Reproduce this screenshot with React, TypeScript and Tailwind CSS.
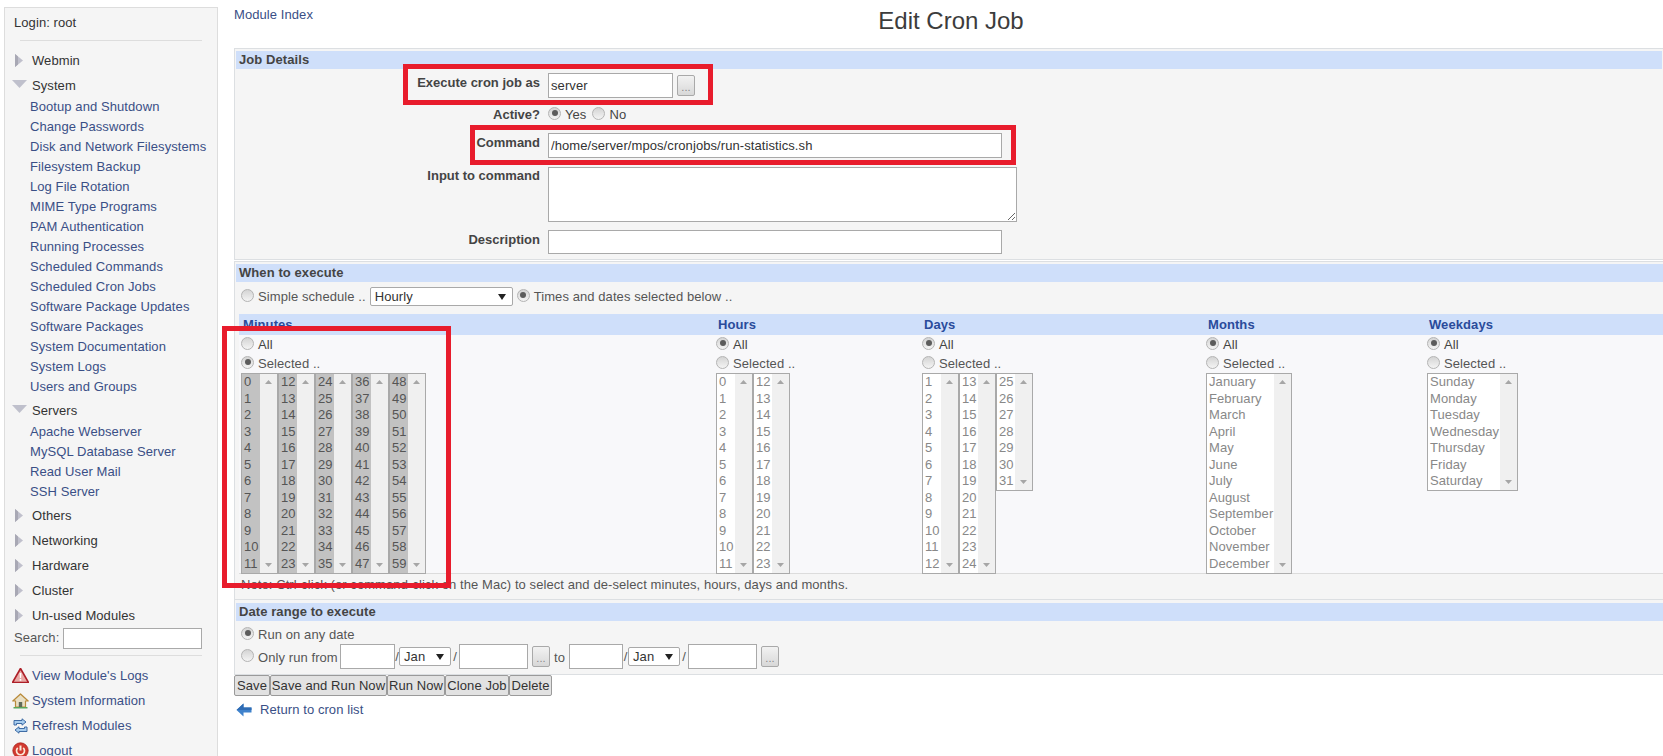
import React from 'react';

const range = (from: number, to: number) => Array.from({ length: to - from + 1 }, (_, i) => String(from + i));

const systemLinks = [
  'Bootup and Shutdown',
  'Change Passwords',
  'Disk and Network Filesystems',
  'Filesystem Backup',
  'Log File Rotation',
  'MIME Type Programs',
  'PAM Authentication',
  'Running Processes',
  'Scheduled Commands',
  'Scheduled Cron Jobs',
  'Software Package Updates',
  'Software Packages',
  'System Documentation',
  'System Logs',
  'Users and Groups',
];

const serverLinks = ['Apache Webserver', 'MySQL Database Server', 'Read User Mail', 'SSH Server'];

const months = ['January', 'February', 'March', 'April', 'May', 'June', 'July', 'August', 'September', 'October', 'November', 'December'];
const weekdays = ['Sunday', 'Monday', 'Tuesday', 'Wednesday', 'Thursday', 'Friday', 'Saturday'];

const actionButtons = [
  { label: 'Save', width: 'w-[36px]' },
  { label: 'Save and Run Now', width: 'w-[117px]' },
  { label: 'Run Now', width: 'w-[58px]' },
  { label: 'Clone Job', width: 'w-[64px]' },
  { label: 'Delete', width: 'w-[43px]' },
];

const Radio = ({ checked = false }: { checked?: boolean }) => (
  <span className="mb-[3px] flex h-[13px] w-[13px] shrink-0 items-center justify-center rounded-full border border-[#b4b4b4] bg-gradient-to-b from-[#d4d4d4] to-[#f4f4f4]">
    {checked && <span className="h-[6px] w-[6px] rounded-full bg-[#5c5c5c]" />}
  </span>
);

const Arrow = ({ up = false }: { up?: boolean }) => (
  <svg width="7" height="4" viewBox="0 0 7 4" className="text-[#a6a6a6]">
    <path d={up ? 'M3.5 0 7 4H0z' : 'M0 0h7L3.5 4z'} fill="currentColor" />
  </svg>
);

// fake multi-select list box, the scrollbar is always showing
const ListBox = ({ items, selected = false, width = 37 }: { items: string[]; selected?: boolean; width?: number }) => (
  <div className="flex shrink-0 self-start border border-[#a9a9a9] bg-white" style={{ width }}>
    <div className={`min-w-0 flex-1 pl-[2px] whitespace-nowrap leading-[16.55px] ${selected ? 'bg-[#c2c2c2] text-[#555]' : 'text-[#888]'}`}>
      {items.map((item) => (
        <div key={item}>{item}</div>
      ))}
    </div>
    <div className="flex w-[17px] shrink-0 flex-col items-center justify-between bg-[#f0f0f0] py-[6px]">
      <Arrow up />
      <Arrow />
    </div>
  </div>
);

const Select = ({ label, width }: { label: string; width: number }) => (
  <div className="flex h-[19px] shrink-0 items-center justify-between rounded-[2px] border border-[#a9a9a9] bg-white pr-[6px] pl-[4px] text-[#333]" style={{ width }}>
    <span>{label}</span>
    <svg width="8" height="6" viewBox="0 0 8 6">
      <path d="M0 0h8L4 6z" fill="#222" />
    </svg>
  </div>
);

const DotsButton = ({ className = '' }: { className?: string }) => (
  <button className={`flex h-[21px] w-[18px] shrink-0 items-end justify-center rounded-[2px] border border-[#a9a9a9] bg-gradient-to-b from-[#f2f2f2] to-[#d8d8d8] pb-[2px] text-[11px] leading-[12px] text-[#888] ${className}`}>
    ...
  </button>
);

const TextField = ({ width, height = 25, value = '' }: { width: number; height?: number; value?: string }) => (
  <input
    readOnly
    value={value}
    className="shrink-0 border border-[#a9a9a9] bg-white pl-[2px] text-[#333] outline-none"
    style={{ width, height }}
  />
);

const SectionHead = ({ title }: { title: string }) => (
  <div className="h-[18px] bg-[#cfdffa] pl-[3px] text-[13px] leading-[17px] font-bold text-[#444]">{title}</div>
);

const FormRow = ({ label, className = '', children }: { label: string; className?: string; children: React.ReactNode }) => (
  <div className={`flex ${className}`}>
    <div className="w-[304px] shrink-0 text-right font-bold tracking-normal text-[#444]">{label}</div>
    <div className="ml-[8px] flex items-center">{children}</div>
  </div>
);

const AllOrSelected = ({ name, all = true, children }: { name: string; all?: boolean; children: React.ReactNode }) => (
  <div className="flex flex-col">
    <div className="flex h-[21px] items-center bg-[#cfdffa] pl-[4px] font-bold text-[#2a4b9b]">{name}</div>
    <div className="flex h-[19px] items-center gap-[4px] pl-[2px] text-[#444]">
      <Radio checked={all} />
      <span>All</span>
    </div>
    <div className="flex h-[19px] items-center gap-[4px] pl-[2px] text-[#555]">
      <Radio checked={!all} />
      <span>Selected ..</span>
    </div>
    <div className="flex h-[201px] pl-[2px]">{children}</div>
  </div>
);

const MenuTriangle = ({ open = false }: { open?: boolean }) => (
  <span className="flex w-[27px] shrink-0 justify-center pl-px">
    {open ? (
      <svg width="15" height="8" viewBox="0 0 15 8" className="mb-[4px]">
        <path d="M0 0h15L7.500 8z" fill="#bfc0cc" />
      </svg>
    ) : (
      <svg width="8" height="13" viewBox="0 0 8 13" className="mb-[1px]">
        <path d="M0 0 8 6.500 0 13z" fill="#c0c0cc" />
        <path d="M0 0 3 2.500V10.500L0 13z" fill="#a8a8b4" />
      </svg>
    )}
  </span>
);

const MenuHead = ({ label, open = false, className = '' }: { label: string; open?: boolean; className?: string }) => (
  <div className={`flex h-[25px] items-center text-[#333] ${className}`}>
    <MenuTriangle open={open} />
    <span>{label}</span>
  </div>
);

const MenuLink = ({ label }: { label: string }) => (
  <div className="h-[20px] pl-[25px] leading-[20px] whitespace-nowrap text-[#3a4f86]">{label}</div>
);

const WarnIcon = () => (
  <svg width="17" height="15" viewBox="0 0 17 15">
    <path d="M8.500 0.500 16.500 14.500H0.500z" fill="#e9a9a6" stroke="#ad1f28" strokeWidth="1.600" strokeLinejoin="round" />
    <path d="M7.600 5h1.800l-.3 5H7.900zM7.700 11h1.600v1.700H7.700z" fill="#fff" />
  </svg>
);

const HomeIcon = () => (
  <svg width="17" height="16" viewBox="0 0 17 16">
    <path d="M8.500 1 0.800 8H3.500V14H13.500V8H16.200z" fill="#e8dfc4" stroke="#b98a3a" strokeWidth="1.200" strokeLinejoin="round" />
    <path d="M6.800 9H10.200V14H6.800z" fill="#5f6a58" />
    <path d="M1.500 14H15.500V15.500H1.500z" fill="#5aa85a" />
  </svg>
);

const RefreshIcon = () => (
  <svg width="15" height="16" viewBox="0 0 15 16">
    <path d="M1 7V2.500H9V0.800L13 4 9 7.200V5.500H3.500V7z" fill="#a8cdee" stroke="#2f5f9c" strokeWidth="0.900" strokeLinejoin="round" />
    <path d="M14 9V13.500H6V15.200L2 12 6 8.800V10.500H11.500V9z" fill="#a8cdee" stroke="#2f5f9c" strokeWidth="0.900" strokeLinejoin="round" />
  </svg>
);

const PowerIcon = () => (
  <svg width="17" height="17" viewBox="0 0 17 17">
    <circle cx="8.500" cy="8.500" r="7.700" fill="#d2392f" stroke="#a82420" strokeWidth="0.800" />
    <path d="M5.800 5.800A4 4 0 1 0 11.200 5.800" fill="none" stroke="#fbe9d8" strokeWidth="1.700" />
    <path d="M8.500 3.500V8.500" stroke="#fbe9d8" strokeWidth="2" />
  </svg>
);

const BottomLink = ({ icon, label }: { icon: React.ReactNode; label: string }) => (
  <div className="flex h-[25px] items-center text-[#3a4f86]">
    <span className="flex w-[24px] shrink-0 justify-center pl-[7px]">{icon}</span>
    <span className="ml-[3px]">{label}</span>
  </div>
);

const Sidebar = () => (
  <aside className="mt-[7px] ml-[4px] h-[760px] w-[214px] shrink-0 border border-[#dddddd] bg-[#f5f5f5]">
    <div className="h-[32px] pt-[5px] pl-[9px] leading-[20px] text-[#333]">Login: root</div>
    <div className="mx-[15px] border-t border-[#dddddd]" />
    <div className="mt-[7px]">
      <MenuHead label="Webmin" />
      <MenuHead label="System" open />
      <div className="-mt-px">
        {systemLinks.map((l) => (
          <MenuLink key={l} label={l} />
        ))}
      </div>
      <MenuHead label="Servers" open className="mt-px" />
      <div className="-mt-px">
        {serverLinks.map((l) => (
          <MenuLink key={l} label={l} />
        ))}
      </div>
      <MenuHead label="Others" className="mt-px" />
      <MenuHead label="Networking" />
      <MenuHead label="Hardware" />
      <MenuHead label="Cluster" />
      <MenuHead label="Un-used Modules" />
    </div>
    <div className="flex h-[20px] items-center pl-[9px] text-[#555]">
      <span>Search:</span>
      <input readOnly className="ml-[4px] h-[21px] w-[139px] border border-[#a9a9a9] bg-white outline-none" />
    </div>
    <div className="mx-[15px] mt-[7px] border-t border-[#dddddd]" />
    <div className="mt-[7px]">
      <BottomLink icon={<WarnIcon />} label="View Module's Logs" />
      <BottomLink icon={<HomeIcon />} label="System Information" />
      <BottomLink icon={<RefreshIcon />} label="Refresh Modules" />
      <BottomLink icon={<PowerIcon />} label="Logout" />
    </div>
  </aside>
);

export default function App() {
  return (
    <div className="relative flex h-[756px] w-[1663px] overflow-hidden bg-white font-['Liberation_Sans',Arial,sans-serif] text-[13px] tracking-[0.08px]">
      <Sidebar />

      <main className="ml-[16px] min-w-0 flex-1">
        <div className="grid h-[48px] grid-cols-[1fr_auto_1fr]">
          <a className="pt-[7px] leading-[16px] text-[#3a4f86]">Module Index</a>
          <h1 className="pt-[7px] pl-[5px] text-[24px] leading-[28px] font-normal tracking-normal text-[#3c3c3c]">Edit Cron Job</h1>
        </div>

        {/* Job details */}
        <section className="h-[212px] border border-r-0 border-[#dcdfe2] bg-[#f5f5f5] px-px pt-[2px]">
          <SectionHead title="Job Details" />
          <div className="pt-[4px]">
            <FormRow label="Execute cron job as" className="h-[25px] leading-[20px]">
              <TextField width={125} value="server" />
              <DotsButton className="ml-[4px]" />
            </FormRow>
            <FormRow label="Active?" className="h-[35px] pt-[7px] leading-[20px]">
              <div className="mb-[9px] flex items-center text-[#444]">
                <Radio checked />
                <span className="ml-[4px]">Yes</span>
                <span className="ml-[6px]">
                  <Radio />
                </span>
                <span className="ml-[4px]">No</span>
              </div>
            </FormRow>
            <FormRow label="Command" className="h-[25px] leading-[20px]">
              <TextField width={454} value="/home/server/mpos/cronjobs/run-statistics.sh" />
            </FormRow>
            <FormRow label="Input to command" className="mt-[9px] h-[55px] leading-[18px]">
              <textarea readOnly className="h-[55px] w-[469px] border border-[#a9a9a9] bg-white outline-none" />
            </FormRow>
            <FormRow label="Description" className="mt-[8px] h-[24px] leading-[20px]">
              <TextField width={454} height={24} />
            </FormRow>
          </div>
        </section>

        {/* When to execute */}
        <section className="mt-[1px] h-[339px] border border-r-0 border-[#dcdfe2] bg-[#f5f5f5] pt-[2px] pl-px">
          <SectionHead title="When to execute" />
          <div className="flex h-[32px] items-center pb-[3px] pl-[5px] text-[#555]">
            <Radio />
            <span className="ml-[4px]">Simple schedule ..</span>
            <span className="ml-[4px]">
              <Select label="Hourly" width={143} />
            </span>
            <span className="ml-[4px]">
              <Radio checked />
            </span>
            <span className="ml-[4px]">Times and dates selected below ..</span>
          </div>
          <div className="ml-[3px] grid h-[260px] grid-cols-[475px_206px_284px_221px_1fr] border-b border-[#dcdcdc] bg-[#f8f8fa]">
            <AllOrSelected name="Minutes" all={false}>
              <ListBox items={range(0, 11)} selected />
              <ListBox items={range(12, 23)} selected />
              <ListBox items={range(24, 35)} selected />
              <ListBox items={range(36, 47)} selected />
              <ListBox items={range(48, 59)} selected />
            </AllOrSelected>
            <AllOrSelected name="Hours">
              <ListBox items={range(0, 11)} />
              <ListBox items={range(12, 23)} />
            </AllOrSelected>
            <AllOrSelected name="Days">
              <ListBox items={range(1, 12)} />
              <ListBox items={range(13, 24)} />
              <ListBox items={range(25, 31)} />
            </AllOrSelected>
            <AllOrSelected name="Months">
              <ListBox items={months} width={86} />
            </AllOrSelected>
            <AllOrSelected name="Weekdays">
              <ListBox items={weekdays} width={91} />
            </AllOrSelected>
          </div>
          <div className="pt-[3px] pl-[5px] leading-[16px] text-[#555]">
            Note: Ctrl-click (or command-click on the Mac) to select and de-select minutes, hours, days and months.
          </div>
        </section>

        {/* Date range */}
        <section className="h-[75px] border border-t-0 border-r-0 border-[#dcdfe2] bg-[#f5f5f5] pt-[3px] pl-px">
          <SectionHead title="Date range to execute" />
          <div className="flex h-[22px] items-center pt-[5px] pl-[5px] text-[#555]">
            <Radio checked />
            <span className="ml-[4px]">Run on any date</span>
          </div>
          <div className="flex h-[27px] items-center pl-[5px] text-[#555]">
            <Radio />
            <span className="ml-[4px] w-[82px] pt-[2px] whitespace-nowrap">Only run from</span>
            <TextField width={55} />
            <span className="w-[4px] text-center">/</span>
            <Select label="Jan" width={52} />
            <span className="w-[8px] text-center">/</span>
            <TextField width={69} />
            <DotsButton className="ml-[4px]" />
            <span className="ml-[4px] w-[15px] pt-[2px]">to</span>
            <TextField width={54} />
            <span className="w-[5px] text-center">/</span>
            <Select label="Jan" width={52} />
            <span className="w-[8px] text-center">/</span>
            <TextField width={69} />
            <DotsButton className="ml-[4px]" />
          </div>
        </section>

        <div className="flex">
          {actionButtons.map((b) => (
            <button key={b.label} className={`h-[21px] rounded-[2px] border border-[#9a9a9a] bg-[#e2e2e2] leading-[18px] whitespace-nowrap text-[#333] ${b.width}`}>
              {b.label}
            </button>
          ))}
        </div>

        <div className="mt-[5px] flex h-[18px] items-center pl-[2px] text-[#3a4f86]">
          <svg width="16" height="14" viewBox="0 0 16 14">
            <path d="M7.500 0.500 0.500 7 7.500 13.500V9.500H15.500V4.500H7.500z" fill="#3f82cc" />
            <path d="M7.500 0.500 0.500 7H15.500V4.500H7.500z" fill="#2f6cb4" />
          </svg>
          <span className="ml-[8px]">Return to cron list</span>
        </div>
      </main>

      {/* red annotation boxes painted on top of the screenshot */}
      <div className="absolute top-[64px] left-[403px] h-[41px] w-[310px] border-[5px] border-[#e81c2c]" />
      <div className="absolute top-[125px] left-[470px] h-[40px] w-[546px] border-[5px] border-[#e81c2c]" />
      <div className="absolute top-[326px] left-[222px] h-[262px] w-[229px] border-[5px] border-[#e81c2c]" />
    </div>
  );
}
